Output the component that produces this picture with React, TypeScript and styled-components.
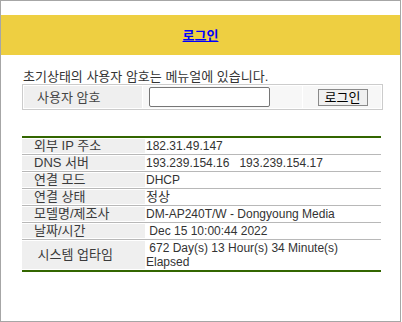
import React from "react";
import styled, { createGlobalStyle } from "styled-components";

const Global = createGlobalStyle`
  html, body { margin: 0; padding: 0; background: #ffffff; }
  body { font-family: "Liberation Sans", "Noto Sans CJK KR", sans-serif; font-size: 12px; color: #333333; }
  * { box-sizing: border-box; }
`;

const Frame = styled.div`
  width: 401px;
  height: 322px;
  border: 1px solid #a6a6a6;
  padding-top: 14px;
`;

const Header = styled.div`
  height: 40px;
  background: #eecf41;
  display: flex;
  align-items: center;
  justify-content: center;
`;

const Title = styled.a`
  color: #0000ff;
  font-weight: bold;
  font-size: 13px;
  text-decoration: underline;
  line-height: 15px;
  margin-top: 1px;
`;

const Content = styled.div`
  padding-left: 21px;
  display: flex;
  flex-direction: column;
`;

const Notice = styled.p`
  margin: 14px 0 0 0;
  line-height: 15px;
  height: 15px;
  padding-left: 1px;
  font-size: 13px;
  color: #333333;
`;

const LoginTable = styled.div`
  width: 361px;
  height: 26px;
  border: 1px solid #cccccc;
  padding: 1px;
  display: grid;
  grid-template-columns: 118px 159px 78px;
  column-gap: 1px;
  background: #ffffff;
`;

const LoginCell = styled.div<{ $bg: string; $center?: boolean }>`
  background: ${(p) => p.$bg};
  display: flex;
  align-items: center;
  justify-content: ${(p) => (p.$center ? "center" : "flex-start")};
`;

const LoginLabel = styled(LoginCell)`
  padding-left: 13px;
  color: #444444;
  font-size: 13px;
  line-height: 15px;
`;

const InputCell = styled(LoginCell)`
  padding-left: 6px;
`;

const PasswordInput = styled.input`
  width: 121px;
  height: 20px;
  border: 1px solid #767676;
  border-radius: 2px;
  background: #ffffff;
  padding: 0 2px;
  font-size: 12px;
  outline: none;
`;

const LoginButton = styled.button`
  width: 50px;
  height: 17px;
  padding: 0;
  margin-left: 1px;
  border: 1px solid #8a8a8a;
  background: #f0f0f0;
  color: #000000;
  font-family: "Liberation Sans", "Noto Sans CJK KR", sans-serif;
  font-size: 13px;
  line-height: 15px;
`;

const InfoTable = styled.div`
  margin-top: 26px;
  width: 359px;
  border-top: 2px solid #336600;
  border-bottom: 2px solid #336600;
  display: flex;
  flex-direction: column;
`;

const InfoRow = styled.div<{ $last?: boolean }>`
  display: grid;
  grid-template-columns: 123px 1fr;
  padding: 1px 0;
  border-bottom: ${(p) => (p.$last ? "none" : "1px solid #b8b8b8")};
`;

const InfoLabel = styled.div`
  background: #efefef;
  padding-left: 12px;
  font-size: 13px;
  line-height: 14px;
  display: flex;
  align-items: center;
  color: #3a3a3a;
  white-space: pre;
`;

const InfoValue = styled.div<{ $ko?: boolean }>`
  padding-left: 1px;
  font-size: ${(p) => (p.$ko ? "13px" : "12px")};
  line-height: 14px;
  color: #333333;
  white-space: pre-wrap;
`;

const rows: [string, string, boolean?][] = [
  ["외부 IP 주소", "182.31.49.147"],
  ["DNS 서버", "193.239.154.16   193.239.154.17"],
  ["연결 모드", "DHCP"],
  ["연결 상태", "정상", true],
  ["모델명/제조사", "DM-AP240T/W - Dongyoung Media"],
  ["날짜/시간", " Dec 15 10:00:44 2022"],
  [" 시스템 업타임", " 672 Day(s) 13 Hour(s) 34 Minute(s) Elapsed"],
];

export default function App() {
  return (
    <>
      <Global />
      <Frame>
        <Header>
          <Title href="#">로그인</Title>
        </Header>
        <Content>
          <Notice>초기상태의 사용자 암호는 메뉴얼에 있습니다.</Notice>
          <LoginTable>
            <LoginLabel $bg="#efefef">사용자 암호</LoginLabel>
            <InputCell $bg="#f7f7f7">
              <PasswordInput type="password" />
            </InputCell>
            <LoginCell $bg="#f7f7f7" $center>
              <LoginButton type="button">로그인</LoginButton>
            </LoginCell>
          </LoginTable>
          <InfoTable>
            {rows.map(([label, value, ko], i) => (
              <InfoRow key={label} $last={i === rows.length - 1}>
                <InfoLabel>{label}</InfoLabel>
                <InfoValue $ko={ko}>{value}</InfoValue>
              </InfoRow>
            ))}
          </InfoTable>
        </Content>
      </Frame>
    </>
  );
}
